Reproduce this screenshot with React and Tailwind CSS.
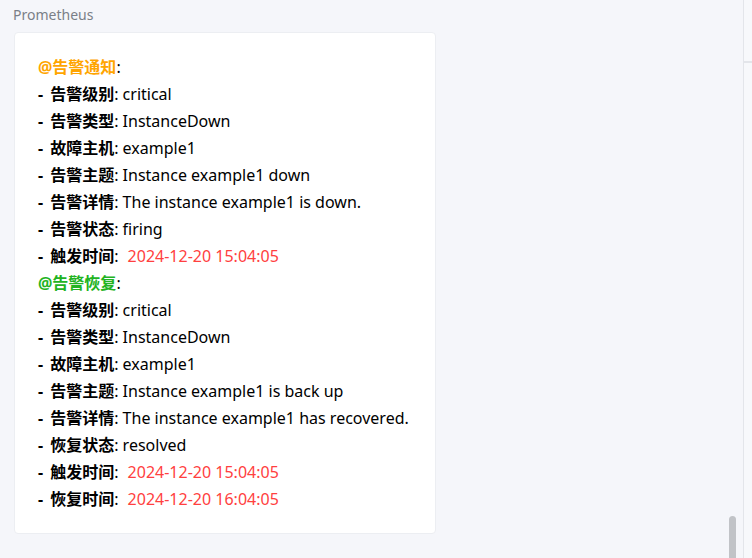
const alert = [
  ["告警级别", "critical"],
  ["告警类型", "InstanceDown"],
  ["故障主机", "example1"],
  ["告警主题", "Instance example1 down"],
  ["告警详情", "The instance example1 is down."],
  ["告警状态", "firing"],
  ["触发时间", "2024-12-20 15:04:05", true],
];

const recover = [
  ["告警级别", "critical"],
  ["告警类型", "InstanceDown"],
  ["故障主机", "example1"],
  ["告警主题", "Instance example1 is back up"],
  ["告警详情", "The instance example1 has recovered."],
  ["恢复状态", "resolved"],
  ["触发时间", "2024-12-20 15:04:05", true],
  ["恢复时间", "2024-12-20 16:04:05", true],
];

const Row = ({ label, value, time }) => (
  <div className="h-[27px] leading-[27px] whitespace-nowrap">
    <span className="font-bold">
      -<span className="ml-[7px]">{label}</span>
    </span>
    :{" "}
    {time ? (
      <span className="ml-[5px] text-[#ff4040]">{value}</span>
    ) : (
      <span>{value}</span>
    )}
  </div>
);

export default function App() {
  return (
    <div
      className="relative h-[558px] w-[752px] overflow-hidden bg-[#f5f6fa] text-black"
      style={{ fontFamily: '"Noto Sans", "Noto Sans CJK SC", sans-serif' }}
    >
      <div className="flex h-full">
        <div className="w-[743px] pl-[14px] pt-[5px]">
          <div className="-ml-px text-[14px] leading-[20px] text-[#7a7f87]">Prometheus</div>
          <div className="mt-[7px] w-[422px] rounded-[4px] border border-[#eceef2] bg-white pl-[23px] pt-[21px] pb-[20px] text-[16px]">
            <div className="h-[27px] leading-[27px]">
              <span className="font-bold text-[#ffa500]">@告警通知</span>:
            </div>
            {alert.map(([l, v, t], i) => (
              <Row key={"a" + i} label={l} value={v} time={t} />
            ))}
            <div className="h-[27px] leading-[27px]">
              <span className="font-bold text-[#22b322]">@告警恢复</span>:
            </div>
            {recover.map(([l, v, t], i) => (
              <Row key={"r" + i} label={l} value={v} time={t} />
            ))}
          </div>
        </div>
        <div className="flex w-[9px] flex-col border-l border-[#e3e5ea] bg-[#f7f8fb]">
          <div className="h-[63px] border-b-2 border-[#e3e5ea]" />
        </div>
      </div>
      <div className="absolute left-[729px] top-[516px] h-[60px] w-[7px] rounded-full bg-[#c1c3c7]" />
    </div>
  );
}
